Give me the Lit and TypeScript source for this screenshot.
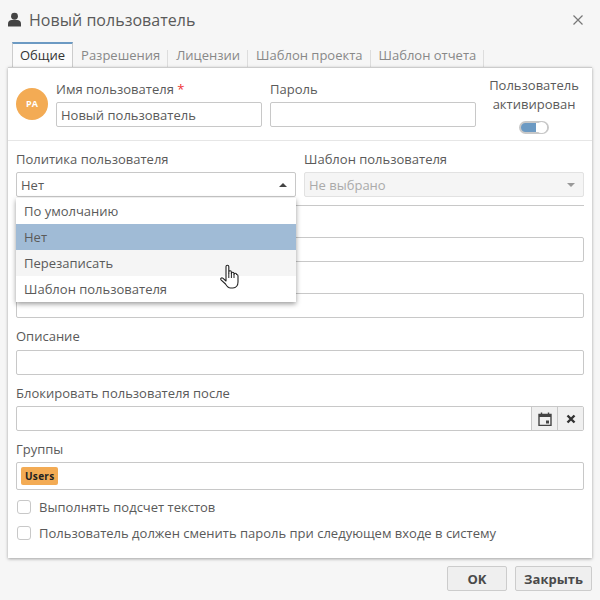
import { LitElement, html, css } from "lit";
import { customElement } from "lit/decorators.js";

@customElement("app-root")
export class AppRoot extends LitElement {
  static styles = css`
    :host { display: block; width: 600px; height: 600px; background: #f6f6f6; font: 13px/18px "Open Sans", sans-serif; color: #5a5a5a; overflow: hidden; position: relative; }
    * { box-sizing: border-box; }
    .title { height: 42px; display: flex; align-items: center; padding: 0 16px 3px 8px; }
    .title svg.user { width: 13px; height: 15px; margin-right: 8px; }
    .title span { font-size: 16px; color: #5a5a5a; flex: 1; letter-spacing: .03px; }
    .title svg.close { width: 12px; height: 12px; }
    .tabs { display: flex; padding-left: 12px; height: 25px; }
    .tab { height: 25px; padding: 4px 8px 0 8px; color: #888; white-space: nowrap; position: relative; }
    .tab::after { content: ""; position: absolute; right: 0; top: 8px; bottom: 0; width: 1px; background: #ddd; }
    .tab.active { color: #333; background: #fbfbfb; border: 1px solid #ccc; border-top: 2px solid #6c9ac3; border-bottom: none; padding: 2px 7px 0; }
    .tab.active::after { display: none; }
    .panel { margin: 0 8px; height: 491px; background: #fff; border-top: 1px solid #ccc; box-shadow: 0 1px 3px rgba(0,0,0,.35); padding: 0 8px; position: relative; }
    .top { display: flex; gap: 8px; padding: 12px 8px 13px; border-bottom: 1px solid #e6e6e6; margin: 0 -8px; height: 73px; }
    .avatar { width: 32px; height: 32px; margin-top: 8px; border-radius: 50%; background: #f3ab54; color: #fff; font-size: 9px; font-weight: 700; display: flex; align-items: center; justify-content: center; flex: none; }
    .f { display: block; }
    .f.w206 { width: 206px; }
    label { display: block; height: 18px; margin-bottom: 4px; white-space: nowrap; }
    .req { color: #e33; }
    .inp { height: 25px; border: 1px solid #c8c8c8; border-radius: 2px; background: #fff; padding: 1px 4px 0; color: #5a5a5a; display: flex; align-items: center; }
    .active-col { width: 100px; text-align: center; line-height: 19px; margin-top: -4px; }
    .toggle { width: 30px; height: 13px; margin: 7px auto 0; border-radius: 7px; border: 2px solid #c8c8c8; background: linear-gradient(90deg, #6c9ac3 58%, #fff 58%); position: relative; }
    .toggle i { position: absolute; right: 0; top: -1px; width: 11px; height: 11px; border-radius: 50%; background: #fff; }
    .policy { display: grid; grid-template-columns: 280px 280px; gap: 8px; padding: 9px 0 8px; border-bottom: 1px solid #c8c8c8; height: 65px; }
    .sel { justify-content: space-between; padding-right: 8px; }
    .sel.off { background: #f5f5f5; border-color: #e2e2e2; color: #aaa; }
    .arrow { width: 0; height: 0; border-left: 4px solid transparent; border-right: 4px solid transparent; }
    .arrow.up { border-bottom: 4px solid #444; }
    .arrow.down { border-top: 4px solid #999; }
    .field { margin-top: 8px; }
    .field label { margin-bottom: 5px; }
    .field.d { margin-top: 9px; }
    .field.t { margin-top: 9px; }
    .field.t label { margin-bottom: 4px; }
    .date { display: flex; padding: 0; overflow: hidden; }
    .date .sp { flex: 1; }
    .date .b { width: 26px; height: 100%; background: #f0f0f0; border-left: 1px solid #c8c8c8; display: flex; align-items: center; justify-content: center; }
    .groups { height: 28px; padding: 0 4px; }
    .tag { background: #f3ab54; color: #222; font-size: 10px; font-weight: 700; height: 18px; line-height: 18px; padding: 0 4px; border-radius: 2px; letter-spacing: .3px; }
    .check { display: flex; align-items: center; height: 18px; margin: 8px 0 0 1px; }
    .check i { width: 14px; height: 14px; border: 1px solid #c8c8c8; border-radius: 3px; margin-right: 8px; background: #fff; }
    .menu { position: absolute; left: 8px; top: 130px; width: 280px; background: #fff; box-shadow: 0 2px 5px rgba(0,0,0,.4); z-index: 5; }
    .menu div { height: 26px; line-height: 26px; padding-left: 8px; }
    .menu .sel-i { background: #a0bbd6; }
    .menu .hov { background: #f5f5f5; }
    .cursor { position: absolute; left: 220px; top: 264px; width: 20px; height: 26px; z-index: 6; }
    .footer { display: flex; justify-content: flex-end; gap: 8px; padding: 8px 8px 0 0; }
    .btn { height: 25px; border: 1px solid #ccc; border-radius: 2px; background: #efefef; color: #4a4a4a; font-weight: 700; display: flex; align-items: center; justify-content: center; }
    .ok { width: 60px; }
    .cl { width: 77px; }
  `;

  render() {
    return html`
      <div class="title">
        <svg class="user" viewBox="0 0 14 15"><circle cx="7" cy="4" r="3.7" fill="#444"/><path d="M0 15v-3.2C0 9.6 1.8 8 4 8h6c2.2 0 4 1.6 4 3.8V15z" fill="#444"/></svg>
        <span>Новый пользователь</span>
        <svg class="close" viewBox="0 0 12 12"><path d="M1.5 1.5l9 9M10.5 1.5l-9 9" stroke="#777" stroke-width="1.2" fill="none"/></svg>
      </div>
      <div class="tabs">
        <div class="tab active">Общие</div>
        <div class="tab">Разрешения</div>
        <div class="tab">Лицензии</div>
        <div class="tab">Шаблон проекта</div>
        <div class="tab">Шаблон отчета</div>
      </div>
      <div class="panel">
        <div class="top">
          <div class="avatar">PA</div>
          <div class="f w206"><label>Имя пользователя <span class="req">*</span></label><div class="inp">Новый пользователь</div></div>
          <div class="f w206"><label>Пароль</label><div class="inp"></div></div>
          <div class="active-col">Пользователь<br />активирован<div class="toggle"><i></i></div></div>
        </div>
        <div class="policy">
          <div><label>Политика пользователя</label><div class="inp sel">Нет<span class="arrow up"></span></div></div>
          <div><label>Шаблон пользователя</label><div class="inp sel off">Не выбрано<span class="arrow down"></span></div></div>
        </div>
        <div class="field"><label></label><div class="inp"></div></div>
        <div class="field"><label></label><div class="inp"></div></div>
        <div class="field d"><label>Описание</label><div class="inp"></div></div>
        <div class="field t"><label>Блокировать пользователя после</label>
          <div class="inp date"><span class="sp"></span>
            <span class="b"><svg width="14" height="14" viewBox="0 0 14 14"><path d="M1 2.5h12v11H1z" fill="none" stroke="#444" stroke-width="1.4"/><path d="M1 2h12v3H1z" fill="#444"/><path d="M3.5 0.5v2M10.5 0.5v2" stroke="#444" stroke-width="1.4"/><rect x="8" y="8.5" width="3" height="3" fill="#444"/></svg></span>
            <span class="b"><svg width="10" height="10" viewBox="0 0 10 10"><path d="M1.5 1.5l7 7M8.5 1.5l-7 7" stroke="#333" stroke-width="2.4" fill="none"/></svg></span>
          </div></div>
        <div class="field t"><label>Группы</label><div class="inp groups"><span class="tag">Users</span></div></div>
        <div class="check"><i></i>Выполнять подсчет текстов</div>
        <div class="check"><i></i>Пользователь должен сменить пароль при следующем входе в систему</div>
        <div class="menu">
          <div>По умолчанию</div>
          <div class="sel-i">Нет</div>
          <div class="hov">Перезаписать</div>
          <div>Шаблон пользователя</div>
        </div>
      </div>
      <div class="footer"><div class="btn ok">OK</div><div class="btn cl">Закрыть</div></div>
      <svg class="cursor" viewBox="0 0 20 26"><path d="M6 14V2.6a1.4 1.4 0 0 1 2.8 0V9V8a1.3 1.3 0 0 1 2.6 0v1.5a1.3 1.3 0 0 1 2.6 0v1a1.3 1.3 0 0 1 2.6 0c.6 0 1.4.5 1.4 1.5v6c0 3.4-2 6-5 6h-2.5c-2.6 0-3.6-1.6-5-4L1 15.8c-.8-1.2.6-2.6 1.8-1.6L6 17z" fill="#fff" stroke="#222" stroke-width="1.1" stroke-linejoin="round"/><path d="M8.8 9v5M11.4 9v5M14 10.5V14" stroke="#222" stroke-width="1" fill="none"/></svg>
    `;
  }
}
